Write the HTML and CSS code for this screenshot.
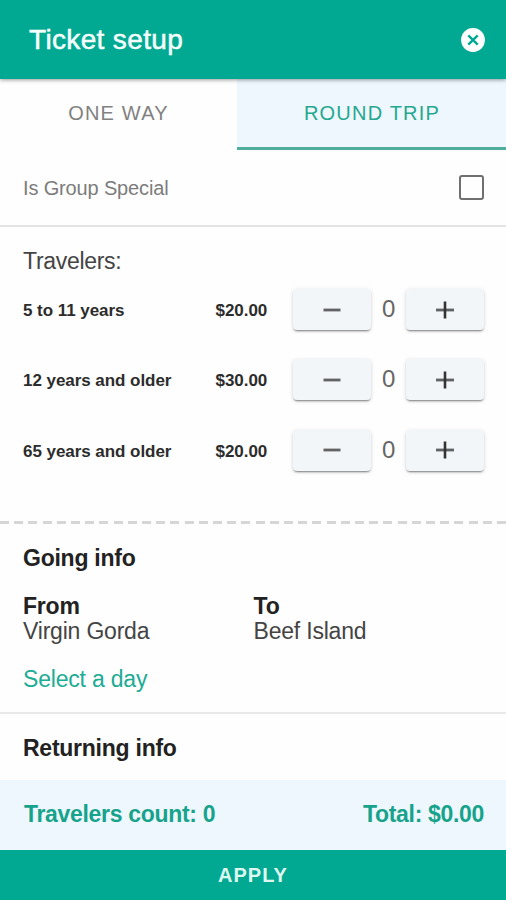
FILE: index.html
```html
<!DOCTYPE html>
<html lang="en">
<head>
<meta charset="utf-8">
<title>Ticket setup</title>
<link rel="stylesheet" href="styles.css">
</head>
<body>
<div class="app">
  <header class="header">
    <h1 class="title">Ticket setup</h1>
    <svg class="close" viewBox="0 0 24 24"><circle cx="12" cy="12" r="11.9" fill="#fff"/><path d="M7.3 7.3l9.4 9.4M16.7 7.3l-9.4 9.4" stroke="#02a992" stroke-width="2.4"/></svg>
  </header>
  <nav class="tabs">
    <div class="tab tab-one">ONE WAY</div>
    <div class="tab tab-round">ROUND TRIP</div>
  </nav>
  <section class="group">
    <span>Is Group Special</span>
    <span class="checkbox"></span>
  </section>
  <section class="travelers">
    <h2 class="travelers-title">Travelers:</h2>
    <div class="row">
      <span class="age">5 to 11 years</span><span class="price">$20.00</span>
      <button class="step"><svg viewBox="0 0 20 20"><path class="bar" d="M1.5 10h17"/></svg></button>
      <span class="count">0</span>
      <button class="step"><svg viewBox="0 0 20 20"><path class="bar" d="M1 10h18"/><path class="stem" d="M10 1.5v17"/></svg></button>
    </div>
    <div class="row">
      <span class="age">12 years and older</span><span class="price">$30.00</span>
      <button class="step"><svg viewBox="0 0 20 20"><path class="bar" d="M1.5 10h17"/></svg></button>
      <span class="count">0</span>
      <button class="step"><svg viewBox="0 0 20 20"><path class="bar" d="M1 10h18"/><path class="stem" d="M10 1.5v17"/></svg></button>
    </div>
    <div class="row">
      <span class="age">65 years and older</span><span class="price">$20.00</span>
      <button class="step"><svg viewBox="0 0 20 20"><path class="bar" d="M1.5 10h17"/></svg></button>
      <span class="count">0</span>
      <button class="step"><svg viewBox="0 0 20 20"><path class="bar" d="M1 10h18"/><path class="stem" d="M10 1.5v17"/></svg></button>
    </div>
  </section>
  <div class="dashes"></div>
  <section class="going">
    <h2 class="heading">Going info</h2>
    <div class="route">
      <div><b>From</b><br>Virgin Gorda</div>
      <div><b>To</b><br>Beef Island</div>
    </div>
    <a class="select">Select a day</a>
  </section>
  <section class="returning">
    <h2 class="heading">Returning info</h2>
  </section>
  <div class="summary"><span>Travelers count: 0</span><span>Total: $0.00</span></div>
  <button class="apply">APPLY</button>
</div>
</body>
</html>
```

FILE: styles.css
```css
* { box-sizing: border-box; }
body {
  margin: 0;
  background: #fefefe;
  color: #444;
  font: 23px/26px "Liberation Sans", Arial, sans-serif;
  letter-spacing: -.2px;
}
h1, h2 { margin: 0; }
button { border: 0; padding: 0; font-family: inherit; }
.app { height: 900px; display: flex; flex-direction: column; overflow: hidden; }
.app > * { flex-shrink: 0; }

.header {
  height: 79px;
  padding: 0 21px 0 29px;
  display: flex;
  justify-content: space-between;
  align-items: center;
  background: #02a992;
  box-shadow: 0 1px 4px rgba(0, 0, 0, .4);
  position: relative;
  z-index: 1;
}
.title {
  font-size: 28px;
  line-height: 32px;
  font-weight: 400;
  letter-spacing: .35px;
  color: #f4fffd;
  -webkit-text-stroke: .5px #f4fffd;
}
.close { width: 24px; height: 24px; margin-top: 1px; }

.tabs { height: 71px; display: grid; grid-template-columns: 237px 1fr; }
.tab {
  padding-top: 21px;
  text-align: center;
  font-size: 20px;
  line-height: 26px;
  letter-spacing: 1.2px;
  color: #818181;
}
.tab-round { padding-left: 1px; background: #eef7fe; color: #25a88f; border-bottom: 3px solid #50ad9c; }

.group {
  height: 77px;
  padding: 0 22px 0 23px;
  display: flex;
  justify-content: space-between;
  align-items: center;
  border-bottom: 2px solid #e3e3e3;
  font-size: 20px;
  letter-spacing: -.15px;
  color: #7c7c7c;
}
.checkbox { width: 25px; height: 25px; border: 2px solid #707070; border-radius: 3px; }

.travelers { height: 294px; padding: 21px 22px 0 23px; }
.travelers-title { font-size: 23px; line-height: 26px; font-weight: 400; letter-spacing: -.3px; color: #444; }
.row {
  height: 41px;
  margin-top: 15px;
  margin-bottom: 29.4px;
  display: grid;
  grid-template-columns: 192.5px 77.5px 78px 35px 78px;
  align-items: center;
}
.row + .row { margin-top: 0; }
.age, .price { padding-top: 3px; font-size: 17px; font-weight: 700; line-height: 20px; letter-spacing: -.05px; color: #2c2c2c; }
.step {
  height: 41px;
  display: flex;
  align-items: center;
  justify-content: center;
  border-radius: 4px;
  background: #f3f6f9;
  box-shadow: 0 2px 2px -1px rgba(0, 0, 0, .45), 0 1px 4px rgba(0, 0, 0, .14);
}
.step svg { width: 20px; height: 20px; }
.bar { stroke: #606264; stroke-width: 2.8; }
.stem { stroke: #333; stroke-width: 2.6; }
.count { font-size: 24px; line-height: 26px; text-align: center; color: #666; margin-top: -1px; }

.dashes {
  height: 3px;
  background: repeating-linear-gradient(90deg, #d6d6d6 0 9px, transparent 9px 14.2px);
}

.going { height: 190px; padding: 21px 23px 0; border-bottom: 2px solid #e9e9e9; }
.heading { font-size: 23px; line-height: 26px; font-weight: 700; letter-spacing: -.25px; color: #222; }
.route { margin-top: 22.6px; display: grid; grid-template-columns: 230.5px 1fr; line-height: 25.4px; }
.route b { color: #222; }
.select { display: block; margin-top: 21.4px; color: #20ab94; }

.returning { height: 66px; padding: 21px 23px 0; }

.summary {
  height: 70px;
  padding: 0 22px 2px 24px;
  display: flex;
  justify-content: space-between;
  align-items: center;
  background: #eef7fe;
  color: #17a38b;
  font-weight: 700;
  letter-spacing: -.32px;
}
.apply {
  height: 50px;
  background: #02a992;
  color: #dff7f1;
  font-size: 20px;
  font-weight: 700;
  letter-spacing: 1px;
}
```
